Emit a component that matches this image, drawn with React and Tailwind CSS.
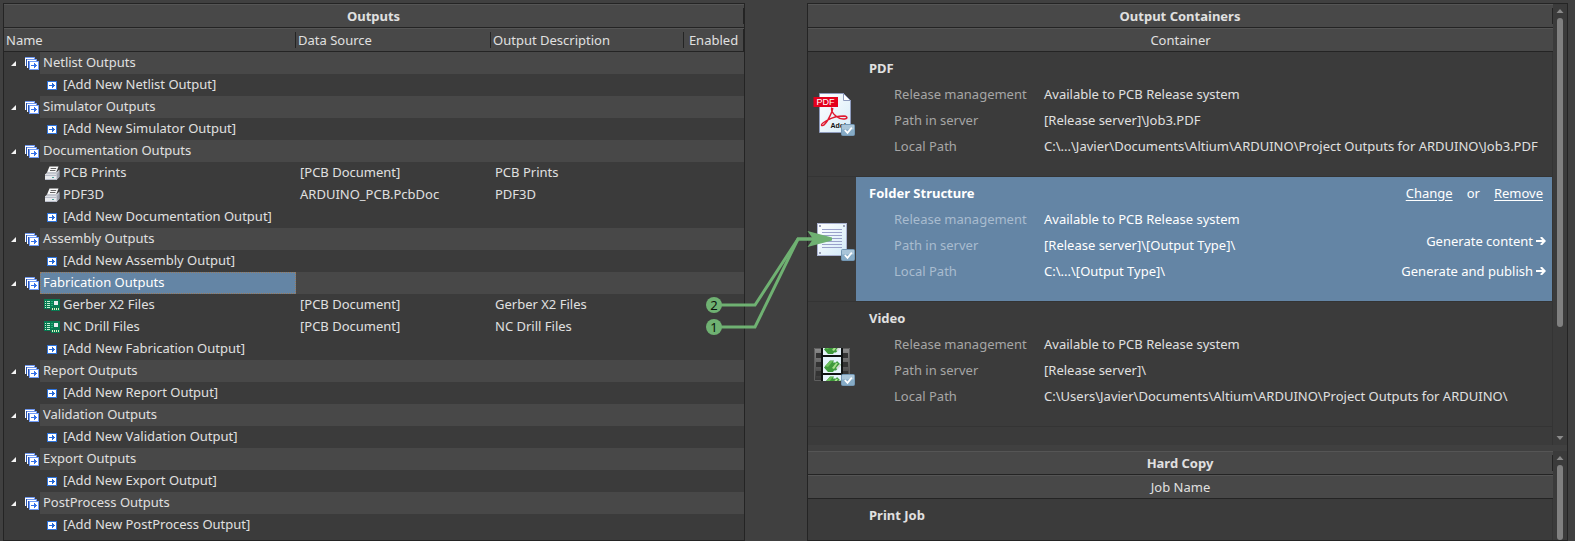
import React from "react";

const GROUPS = [
  { name: "Netlist Outputs", add: "[Add New Netlist Output]", items: [] },
  { name: "Simulator Outputs", add: "[Add New Simulator Output]", items: [] },
  {
    name: "Documentation Outputs",
    add: "[Add New Documentation Output]",
    items: [
      { icon: "printer", name: "PCB Prints", source: "[PCB Document]", description: "PCB Prints" },
      { icon: "printer", name: "PDF3D", source: "ARDUINO_PCB.PcbDoc", description: "PDF3D" },
    ],
  },
  { name: "Assembly Outputs", add: "[Add New Assembly Output]", items: [] },
  {
    name: "Fabrication Outputs",
    add: "[Add New Fabrication Output]",
    selected: true,
    items: [
      { icon: "board", name: "Gerber X2 Files", source: "[PCB Document]", description: "Gerber X2 Files", order: 2 },
      { icon: "board", name: "NC Drill Files", source: "[PCB Document]", description: "NC Drill Files", order: 1 },
    ],
  },
  { name: "Report Outputs", add: "[Add New Report Output]", items: [] },
  { name: "Validation Outputs", add: "[Add New Validation Output]", items: [] },
  { name: "Export Outputs", add: "[Add New Export Output]", items: [] },
  { name: "PostProcess Outputs", add: "[Add New PostProcess Output]", items: [] },
];

const CONTAINERS = [
  {
    title: "PDF",
    icon: "pdf",
    rows: [
      ["Release management", "Available to PCB Release system"],
      ["Path in server", "[Release server]\\Job3.PDF"],
      ["Local Path", "C:\\...\\Javier\\Documents\\Altium\\ARDUINO\\Project Outputs for ARDUINO\\Job3.PDF"],
    ],
  },
  {
    title: "Folder Structure",
    icon: "folder",
    selected: true,
    rows: [
      ["Release management", "Available to PCB Release system"],
      ["Path in server", "[Release server]\\[Output Type]\\"],
      ["Local Path", "C:\\...\\[Output Type]\\"],
    ],
  },
  {
    title: "Video",
    icon: "video",
    rows: [
      ["Release management", "Available to PCB Release system"],
      ["Path in server", "[Release server]\\"],
      ["Local Path", "C:\\Users\\Javier\\Documents\\Altium\\ARDUINO\\Project Outputs for ARDUINO\\"],
    ],
  },
];

/* ---------- small icons ---------- */

function StackIcon() {
  return (
    <svg width="14" height="13" viewBox="0 0 14 13" shapeRendering="crispEdges" aria-hidden="true">
      <rect width="10" height="9" fill="#6f97ee" />
      <rect y="1" width="9" height="8" fill="#fff" />
      <rect x="1" y="2" width="9" height="7" fill="#2b55b0" />
      <rect x="2" y="2" width="10" height="9" fill="#6f97ee" />
      <rect x="2" y="3" width="9" height="8" fill="#fff" />
      <rect x="3" y="4" width="9" height="7" fill="#2b55b0" />
      <rect x="4" y="4" width="10" height="9" fill="#6f9bf8" />
      <rect x="5" y="5" width="8" height="7" fill="#fff" />
      <path d="M6 8h6v1H6zM9 6h1v1H9zM9 7h2v1H9zM9 9h2v1H9zM9 10h1v1H9z" fill="#3470e8" />
    </svg>
  );
}

function AddIcon() {
  return (
    <svg width="10" height="9" viewBox="0 0 10 9" shapeRendering="crispEdges" aria-hidden="true">
      <rect width="10" height="9" fill="#2f74dc" />
      <rect x="1" y="1" width="8" height="7" fill="#fff" />
      <path d="M2 4h6v1H2zM5 2h1v1H5zM5 3h2v1H5zM5 5h2v1H5zM5 6h1v1H5z" fill="#2468d8" />
    </svg>
  );
}

function PrinterIcon() {
  return (
    <svg width="16" height="15" viewBox="0 0 16 15" aria-hidden="true">
      <path d="M5.500.5h9l-2.400 6H3z" fill="#fafafa" />
      <path d="M6.600 2.500h5.600M6 4.500h5.400" stroke="#666" />
      <path d="M1 8.500 3.400 6h9.400l2.600-2.400v7.200L12.500 14H1z" fill="#c3c6ce" />
      <path d="M12.500 8.500 15.400 5v6L12.500 14z" fill="#a0a4b0" />
      <path d="M1 8.300h11.500V14H1z" fill="#e8eaee" />
      <path d="M1 9.500h11.500M1 13.500h11.500" stroke="#b8bcc8" />
      <path d="M8 11h2v1H8z" fill="#4fa09a" />
    </svg>
  );
}

function BoardIcon() {
  return (
    <svg width="16" height="12" viewBox="0 0 16 12" shapeRendering="crispEdges" aria-hidden="true">
      <rect width="16" height="10" fill="#087a52" />
      <rect x="7" y="9" width="9" height="3" fill="#087a52" />
      <path d="M1 2h1v1H1zM1 4h1v1H1zM1 6h1v1H1zM1 8h1v1H1zM3 2h3v1H3zM3 4h3v1H3zM3 6h3v1H3zM3 8h3v1H3z" fill="#c5f0d2" />
      <path d="M7 2h2v1H7zM7 4h2v1H7zM7 6h2v1H7z" fill="#23b07b" />
      <rect x="10" y="2" width="4" height="4" fill="#e8ecef" />
      <path d="M8 9h1v2H8zM10 9h1v2h-1zM12 9h1v2h-1zM14 9h1v2h-1z" fill="#dff0c0" />
    </svg>
  );
}

function LeafIcon({ kind }) {
  return (
    <span className="flex w-4 shrink-0 justify-center">
      {kind === "printer" ? <PrinterIcon /> : kind === "board" ? <BoardIcon /> : <AddIcon />}
    </span>
  );
}

/* ---------- container icons ---------- */

function CheckBadge() {
  return (
    <g>
      <path d="M33.500 35.500q0-1 1-1h11q1 0 1 1v9q0 1-1 1h-11q-1 0-1-1z" fill="#86abc6" stroke="#7397b4" />
      <path d="M34 35h12v4.500H34z" fill="#a9c5d9" />
      <path d="m36.800 40 2.700 2.800 4.300-5.200" fill="none" stroke="#fff" strokeWidth="1.800" />
    </g>
  );
}

function PdfIcon() {
  return (
    <svg width="48" height="48" viewBox="0 0 48 48" aria-hidden="true">
      <defs>
        <linearGradient id="page" x1="0" y1="0" x2="1" y2="1">
          <stop offset="0" stopColor="#ffffff" />
          <stop offset="1" stopColor="#d6ecf8" />
        </linearGradient>
      </defs>
      <path d="M11.500 3.500h24l7 7v32h-31z" fill="url(#page)" stroke="#8e9bbd" />
      <path d="M35.500 3.500v7h7z" fill="#fff" stroke="#8e9bbd" />
      <path
        d="M23.700 17.500c-.6 3 1.600 6.500 4.300 8.700 3 2.300 7.500 3.300 10.200 2.300 1.600-.8.300-2.500-2.200-2.600-6 0-12.500 1.800-16.500 4.200-4 2.200-6.500 4-6 5 .8 1.500 4-.9 6-4.400 2.200-4 5.200-9.500 5.200-12.700"
        fill="none"
        stroke="#e01a30"
        strokeWidth="1.500"
      />
      <rect x="5.500" y="7" width="24.500" height="10" fill="#e4001c" />
      <text x="8.500" y="15.200" fontFamily="Liberation Sans, sans-serif" fontSize="9" fill="#fff">PDF</text>
      <text x="22.500" y="38" fontFamily="Liberation Sans, sans-serif" fontSize="7" fontWeight="700" fill="#111">Adobe</text>
      <CheckBadge />
    </svg>
  );
}

function FolderIcon() {
  return (
    <svg width="48" height="48" viewBox="0 0 48 48" aria-hidden="true">
      <defs>
        <linearGradient id="sheet" x1="0" y1="0" x2="1" y2="1">
          <stop offset="0" stopColor="#ffffff" />
          <stop offset="1" stopColor="#d2eaf8" />
        </linearGradient>
      </defs>
      <rect x="9.500" y="8.500" width="29" height="32" fill="url(#sheet)" stroke="#a9b2d0" />
      <path d="M14 14.500h20M14 17.500h20M14 20.500h20M14 23.500h20M14 26.500h20M14 29.500h20M14 32.500h20" stroke="#9aa1ca" />
      <path d="M11 10h2v2h-2zM35 10h2v2h-2zM11 37h2v2h-2z" fill="#9aa0b8" />
      <CheckBadge />
    </svg>
  );
}

function Chip() {
  return (
    <g>
      <path d="M16 27.500 22 20.500h4l-1 2h3l1-1.500 4 4-5 5.500h-2l-1 1.500h-5z" fill="#3f9a3c" />
      <path d="m17 26 5-5h3l-5 6z" fill="#6cc05c" />
      <path d="m24 28 4-5h2l-4 6z" fill="#a8e08c" />
      <path d="m28 28 3.500-4 1.500 1.500-3.500 4z" fill="#d8dcd8" />
    </g>
  );
}

function VideoIcon() {
  return (
    <svg width="48" height="48" viewBox="0 0 48 48" aria-hidden="true">
      <defs>
        <linearGradient id="film" x1="0" y1="0" x2="0" y2="1">
          <stop offset="0" stopColor="#8d8d8d" />
          <stop offset="0.600" stopColor="#585858" />
          <stop offset="1" stopColor="#333333" />
        </linearGradient>
        <clipPath id="frameTop"><rect x="15" y="8" width="18" height="7" /></clipPath>
        <clipPath id="frameBottom"><rect x="15" y="35" width="18" height="6" /></clipPath>
      </defs>
      <rect x="6" y="8" width="36" height="33" fill="url(#film)" />
      <path d="M6.500 8.500h35v32h-35z" fill="none" stroke="#5f5f5f" />
      <path d="M13 8h22v33H13z" fill="#101313" />
      <path d="M8 13h5v5H8zM8 22h5v5H8zM8 31h5v5H8zM35 13h5v5h-5zM35 22h5v5h-5zM35 31h5v5h-5z" fill="#333333" />
      <path d="M15 8h18v7H15zM15 17h18v16H15zM15 35h18v6H15z" fill="#e6f4fc" />
      <Chip />
      <g clipPath="url(#frameTop)"><g transform="translate(0 -18)"><Chip /></g></g>
      <g clipPath="url(#frameBottom)"><g transform="translate(0 16)"><Chip /></g></g>
      <CheckBadge />
    </svg>
  );
}

function ContainerIcon({ kind }) {
  if (kind === "pdf") return <PdfIcon />;
  if (kind === "folder") return <FolderIcon />;
  return <VideoIcon />;
}

/* ---------- outputs panel ---------- */

function ColumnHead({ label, className, last }) {
  return (
    <th scope="col" className="h-6 border-t border-b border-t-[#555555] border-b-[#242424] bg-[#484848] p-0 font-normal">
      <div className={last ? "flex h-[22px] items-center border-r border-[#242424]" : "flex h-[22px] items-center"}>
        <span className={className}>{label}</span>
        {!last && <span className="h-4 w-px bg-[#242424]" />}
      </div>
    </th>
  );
}

function GroupRows({ group }) {
  return (
    <>
      <tr className="bg-[#484848]">
        <td className="p-0">
          <div className="flex h-[22px]">
            <button type="button" aria-label={"Collapse " + group.name} className="flex w-9 shrink-0 items-center bg-[#3b3b3b] pl-[7px]">
              <svg width="5" height="5" viewBox="0 0 5 5" aria-hidden="true">
                <path d="M5 0v5H0z" fill="#f5f5f5" />
              </svg>
              <span className="pl-[9px]"><StackIcon /></span>
            </button>
            <span
              className={
                group.selected
                  ? "flex flex-1 items-center bg-[#6485a5] pb-0.5 pl-[3px] text-white outline-1 -outline-offset-1 outline-dotted outline-[#9b7a5a]"
                  : "flex flex-1 items-center pb-0.5 pl-[3px]"
              }
            >
              {group.name}
            </span>
          </div>
        </td>
        <td /><td /><td />
      </tr>
      {group.items.map((item) => (
        <tr key={item.name}>
          <td className="p-0">
            <div className="flex h-[22px] items-center gap-[3px] pl-10">
              <LeafIcon kind={item.icon} />
              <span className="pb-0.5">{item.name}</span>
            </div>
          </td>
          <td className="p-0 pb-0.5 pl-1">{item.source}</td>
          <td className="p-0 pb-0.5 pl-1">{item.description}</td>
          <td className="p-0">
            {item.order && (
              <button type="button" aria-label={"Output order of " + item.name} className="mx-auto flex size-4 items-center justify-center rounded-full bg-[#6fb172] leading-4 text-[#0c140c]">
                {item.order}
              </button>
            )}
          </td>
        </tr>
      ))}
      <tr>
        <td className="p-0" colSpan={4}>
          <button type="button" className="flex h-[22px] items-center gap-[3px] pl-10">
            <LeafIcon kind="add" />
            <span className="pb-0.5">{group.add}</span>
          </button>
        </td>
      </tr>
    </>
  );
}

function OutputsPanel() {
  return (
    <section className="min-w-0 flex-[742] border border-[#242424] bg-[#3b3b3b]">
      <table className="w-full table-fixed border-separate border-spacing-0 text-left">
        <colgroup>
          <col />
          <col className="w-[195px]" />
          <col className="w-[193px]" />
          <col className="w-[60px]" />
        </colgroup>
        <thead>
          <tr>
            <th colSpan={4} scope="colgroup" className="h-6 border-t border-b border-t-[#555555] border-b-[#242424] bg-[#484848] p-0">
              <div className="flex h-[22px] items-center">
                <span className="flex-1 text-center font-bold">Outputs</span>
                <span className="h-4 w-px bg-[#242424]" />
              </div>
            </th>
          </tr>
          <tr>
            <ColumnHead label="Name" className="flex-1 pl-0.5" />
            <ColumnHead label="Data Source" className="flex-1 pl-0.5" />
            <ColumnHead label="Output Description" className="flex-1 pl-0.5" />
            <ColumnHead label="Enabled" className="flex-1 text-center" last />
          </tr>
        </thead>
        <tbody>
          {GROUPS.map((g) => (
            <GroupRows key={g.name} group={g} />
          ))}
        </tbody>
      </table>
    </section>
  );
}

/* Lines that tie the enabled outputs to the selected container. */
function Connector() {
  return (
    <div className="relative w-[62px] shrink-0">
      <svg className="pointer-events-none absolute top-[197px] -left-[45px] z-10" width="140" height="140" viewBox="700 200 140 140" aria-hidden="true">
        <g fill="none" stroke="#6fb172" strokeWidth="3">
          <path d="M721 305h34l43-66h18" />
          <path d="M721 327h34l43-88h18" />
        </g>
        <path d="M807.500 231 832 237.500v3l-24.500 6.500 5.500-8z" fill="#6fb172" />
      </svg>
    </div>
  );
}

/* ---------- containers panel ---------- */

function BarHead({ children, strong }) {
  return (
    <div className="flex h-6 items-center border-t border-b border-t-[#555555] border-b-[#242424] bg-[#484848]">
      {strong ? <h2 className="flex-1 text-center font-bold">{children}</h2> : <p className="flex-1 text-center">{children}</p>}
      {strong && <span className="h-4 w-px bg-[#242424]" />}
    </div>
  );
}

function Arrow({ down }) {
  return (
    <svg width="8" height="4" viewBox="0 0 8 4" aria-hidden="true">
      <path d={down ? "M.5 0h7L4 4z" : "M.5 4h7L4 0z"} fill="#8a8a8a" />
    </svg>
  );
}

function GenerateArrow() {
  return (
    <svg width="10" height="8" viewBox="0 0 10 8" aria-hidden="true">
      <path d="M0 3h6.200L4 .8 5.200 0h1L10 4 6.200 8h-1L4 7.200 6.200 5H0z" fill="#fff" />
    </svg>
  );
}

function ContainerItem({ item }) {
  return (
    <li className="flex border-b border-[#343434]">
      <div className="flex w-12 shrink-0 items-center">
        <ContainerIcon kind={item.icon} />
      </div>
      <div className={item.selected ? "flex min-h-[124px] min-w-0 flex-1 bg-[#6485a5] pt-1 pl-[13px] text-white" : "flex min-h-[124px] min-w-0 flex-1 pt-1 pl-[13px]"}>
        <div className="min-w-0 flex-1">
          <h3 className="h-[25px] leading-6 font-bold">{item.title}</h3>
          <dl className="grid grid-cols-[150px_1fr] pl-[25px] leading-[26px] whitespace-nowrap">
            {item.rows.map(([k, v]) => (
              <React.Fragment key={k}>
                <dt className={item.selected ? "text-[#a9bccf]" : "text-[#a6a6a6]"}>{k}</dt>
                <dd>{v}</dd>
              </React.Fragment>
            ))}
          </dl>
        </div>
        {item.selected && (
          <div className="flex flex-col items-end pr-1.5">
            <div className="flex gap-[14px] pr-[3px] leading-6">
              <a href="#change" className="underline underline-offset-2">Change</a>
              <span>or</span>
              <a href="#remove" className="underline underline-offset-2">Remove</a>
            </div>
            <button type="button" className="mt-[21px] flex h-[30px] items-center gap-[3px]">
              Generate content <GenerateArrow />
            </button>
            <button type="button" className="flex h-[30px] items-center gap-[3px]">
              Generate and publish <GenerateArrow />
            </button>
          </div>
        )}
      </div>
    </li>
  );
}

function ContainersPanel() {
  return (
    <section className="flex min-w-0 flex-[761] flex-col border border-[#242424] bg-[#3b3b3b]">
      <div className="flex">
        <div className="min-w-0 flex-1">
          <BarHead strong>Output Containers</BarHead>
          <BarHead>Container</BarHead>
          <ul className="border-r border-[#343434] pb-[18px]">
            {CONTAINERS.map((c) => (
              <ContainerItem key={c.title} item={c} />
            ))}
          </ul>
        </div>
        <div className="flex w-[14px] flex-col items-center pt-[5px] pb-[5px]">
          <Arrow />
          <span className="mt-[5px] w-1.5 flex-[31] rounded-full bg-[#808080]" />
          <span className="flex-[11]" />
          <Arrow down />
        </div>
      </div>
      <div className="h-1.5 bg-[#404040]" />
      <div className="flex flex-1">
        <div className="flex min-w-0 flex-1 flex-col">
          <BarHead strong>Hard Copy</BarHead>
          <BarHead>Job Name</BarHead>
          <div className="flex-1 border-r border-[#343434] pt-1 pl-[61px]">
            <h3 className="leading-6 font-bold">Print Job</h3>
          </div>
        </div>
        <div className="flex w-[14px] flex-col items-center pt-[5px]">
          <Arrow />
          <span className="mt-[5px] w-1.5 flex-1 rounded-full bg-[#808080]" />
        </div>
      </div>
    </section>
  );
}

export default function App() {
  return (
    <main className="flex min-h-screen bg-[#404040] pt-[3px] pr-[7px] pl-[3px] font-['Noto_Sans','Open_Sans',sans-serif] text-[13px] leading-5 text-[#e0e0e0]">
      <OutputsPanel />
      <Connector />
      <ContainersPanel />
    </main>
  );
}
